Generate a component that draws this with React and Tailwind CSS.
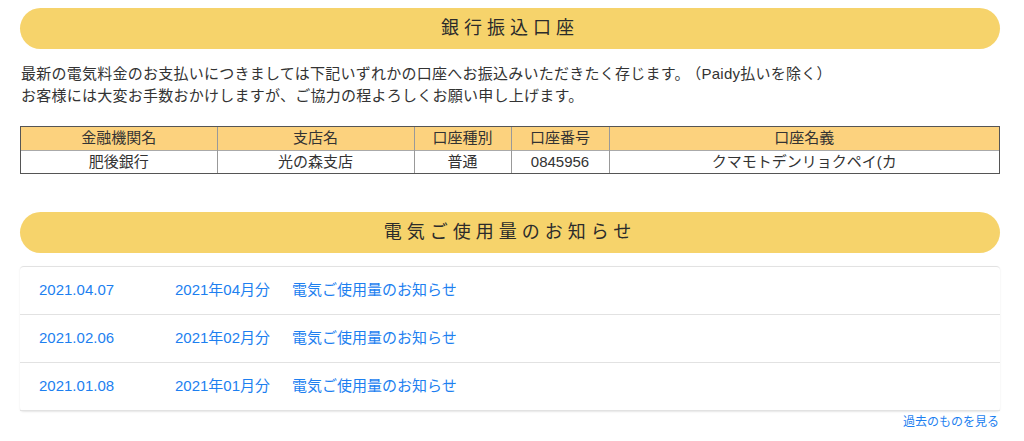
const font = { fontFamily: '"Liberation Sans", "Noto Sans CJK JP", sans-serif' };

const account = {
  bank: "肥後銀行",
  branch: "光の森支店",
  type: "普通",
  number: "0845956",
  holder: "クマモトデンリョクペイ(カ",
};

const notices = [
  { date: "2021.04.07", month: "2021年04月分" },
  { date: "2021.02.06", month: "2021年02月分" },
  { date: "2021.01.08", month: "2021年01月分" },
];

const SectionTitle = ({ children }) => (
  <h2 className="h-[41px] rounded-full bg-[#f6d36b] flex items-center justify-center text-[18px] tracking-[5px] text-[#2b2b2b] font-normal">
    {children}
  </h2>
);

const cell = "border-l border-[#999] first:border-l-0";

const App = () => {
  return (
    <div className="w-[1024px] h-[441px] bg-white pl-5 pr-6 pt-2 text-[#333]" style={font}>
      <SectionTitle>銀行振込口座</SectionTitle>

      <p className="mt-[14px] text-[15px] leading-[22px] pl-px tracking-[0.25px]">
        最新の電気料金のお支払いにつきましては下記いずれかの口座へお振込みいただきたく存じます。
        <span className="ml-1">（Paidy払いを除く）</span>
        <br />
        お客様には大変お手数おかけしますが、ご協力の程よろしくお願い申し上げます。
      </p>

      <div className="mt-[19px] border border-[#555]">
        <table className="w-full border-collapse text-[15px] text-center">
          <thead>
            <tr className="bg-[#fcd27e] h-[23px]">
              <th className={`${cell} font-normal w-[196px]`}>金融機関名</th>
              <th className={`${cell} font-normal w-[197px]`}>支店名</th>
              <th className={`${cell} font-normal w-[97px]`}>口座種別</th>
              <th className={`${cell} font-normal w-[98px]`}>口座番号</th>
              <th className={`${cell} font-normal`}>口座名義</th>
            </tr>
          </thead>
          <tbody>
            <tr className="h-[23px] border-t border-[#aaa]">
              <td className={cell}>{account.bank}</td>
              <td className={cell}>{account.branch}</td>
              <td className={cell}>{account.type}</td>
              <td className={cell}>{account.number}</td>
              <td className={cell}>{account.holder}</td>
            </tr>
          </tbody>
        </table>
      </div>

      <div className="mt-[38px]">
        <SectionTitle>電気ご使用量のお知らせ</SectionTitle>
      </div>

      <ul className="mt-[13px] rounded-[4px] border-t border-[#e2e2e2] shadow-[0_1px_2px_rgba(0,0,0,0.1)]">
        {notices.map((n) => (
          <li
            key={n.date}
            className="h-[48px] flex items-center border-b border-[#e2e2e2] pl-[19px] text-[15px] text-[#1d7ff0]"
          >
            <span className="w-[136px]">{n.date}</span>
            <span>{n.month}</span>
            <span className="ml-[22px]">電気ご使用量のお知らせ</span>
          </li>
        ))}
      </ul>

      <div className="mt-[3px] text-right text-[12px] leading-[16px] text-[#1d7ff0] pr-px">
        過去のものを見る
      </div>
    </div>
  );
};

export default App;
